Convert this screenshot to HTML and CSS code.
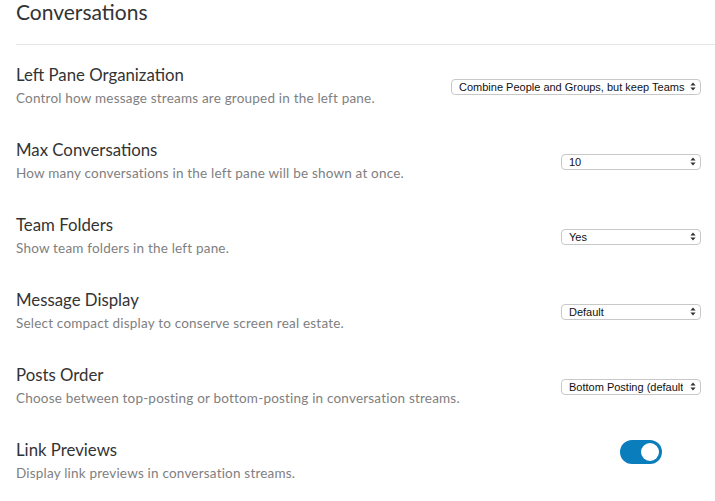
FILE: index.html
```html
<!DOCTYPE html>
<html>
<head>
<meta charset="utf-8">
<link rel="stylesheet" href="styles.css">
</head>
<body>
<div class="page">
  <h1 class="title">Conversations</h1>
  <div class="rows">
    <div class="row">
      <div class="text">
        <div class="label">Left Pane Organization</div>
        <div class="desc">Control how message streams are grouped in the left pane.</div>
      </div>
      <div class="select wide"><span class="val">Combine People and Groups, but keep Teams</span><svg class="arr" width="6" height="9" viewBox="0 0 6 9"><path d="M3 0.5 L5.6 3.6 L0.4 3.6 Z M3 8.5 L5.6 5.4 L0.4 5.4 Z" fill="#333"/></svg></div>
    </div>
    <div class="row">
      <div class="text">
        <div class="label">Max Conversations</div>
        <div class="desc">How many conversations in the left pane will be shown at once.</div>
      </div>
      <div class="select"><span class="val">10</span><svg class="arr" width="6" height="9" viewBox="0 0 6 9"><path d="M3 0.5 L5.6 3.6 L0.4 3.6 Z M3 8.5 L5.6 5.4 L0.4 5.4 Z" fill="#333"/></svg></div>
    </div>
    <div class="row">
      <div class="text">
        <div class="label">Team Folders</div>
        <div class="desc">Show team folders in the left pane.</div>
      </div>
      <div class="select"><span class="val">Yes</span><svg class="arr" width="6" height="9" viewBox="0 0 6 9"><path d="M3 0.5 L5.6 3.6 L0.4 3.6 Z M3 8.5 L5.6 5.4 L0.4 5.4 Z" fill="#333"/></svg></div>
    </div>
    <div class="row">
      <div class="text">
        <div class="label">Message Display</div>
        <div class="desc">Select compact display to conserve screen real estate.</div>
      </div>
      <div class="select"><span class="val">Default</span><svg class="arr" width="6" height="9" viewBox="0 0 6 9"><path d="M3 0.5 L5.6 3.6 L0.4 3.6 Z M3 8.5 L5.6 5.4 L0.4 5.4 Z" fill="#333"/></svg></div>
    </div>
    <div class="row">
      <div class="text">
        <div class="label">Posts Order</div>
        <div class="desc">Choose between top-posting or bottom-posting in conversation streams.</div>
      </div>
      <div class="select"><span class="val">Bottom Posting (default)</span><svg class="arr" width="6" height="9" viewBox="0 0 6 9"><path d="M3 0.5 L5.6 3.6 L0.4 3.6 Z M3 8.5 L5.6 5.4 L0.4 5.4 Z" fill="#333"/></svg></div>
    </div>
    <div class="row">
      <div class="text">
        <div class="label">Link Previews</div>
        <div class="desc">Display link previews in conversation streams.</div>
      </div>
      <div class="toggle-wrap"><div class="toggle"><div class="knob"></div></div></div>
    </div>
  </div>
</div>
</body>
</html>
```
FILE: styles.css
```css
html, body {
  margin: 0;
  padding: 0;
  background: #fff;
}
.page {
  padding-left: 16px;
  font-family: Lato, "Liberation Sans", sans-serif;
}
.title {
  margin: 0;
  height: 45px;
  box-sizing: border-box;
  font-size: 21px;
  font-weight: 400;
  color: #333;
  line-height: 24px;
  padding-top: 0;
  border-bottom: 1px solid #e6e6e6;
}
.rows {
  padding-top: 12px;
  padding-right: 14px;
}
.row {
  display: flex;
  align-items: center;
  justify-content: space-between;
  height: 75px;
}
.text {
  display: flex;
  flex-direction: column;
  margin-top: -18px;
}
.label {
  font-size: 16.8px;
  color: #333;
  line-height: 20px;
}
.desc {
  font-size: 13.5px;
  letter-spacing: 0.2px;
  color: #808080;
  line-height: 16px;
  margin-top: 5px;
}
.select {
  width: 140px;
  height: 16px;
  box-sizing: border-box;
  border: 1px solid #c8c8c8;
  border-radius: 4px;
  display: flex;
  align-items: center;
  justify-content: space-between;
  padding: 0 4px 0 7px;
  font-family: "Liberation Sans", Arial, sans-serif;
  font-size: 11px;
  color: #111;
  margin-top: -16px;
  overflow: hidden;
  background: #fff;
}
.select.wide {
  width: 250px;
}
.val {
  white-space: nowrap;
  overflow: hidden;
  flex: 1;
  min-width: 0;
}
.select:not(.wide) .val {
  flex: none;
  width: 114px;
}
.arr {
  flex: none;
  margin-left: 2px;
}
.toggle-wrap {
  width: 80px;
  display: flex;
  justify-content: flex-start;
  margin-top: -36px;
  margin-right: 1px;
}
.toggle {
  width: 42px;
  height: 24px;
  border-radius: 12px;
  background: #0a7dbd;
  display: flex;
  align-items: center;
  justify-content: flex-end;
  padding: 0 3px;
  box-sizing: border-box;
}
.knob {
  width: 18px;
  height: 18px;
  border-radius: 50%;
  background: #fff;
}
```
